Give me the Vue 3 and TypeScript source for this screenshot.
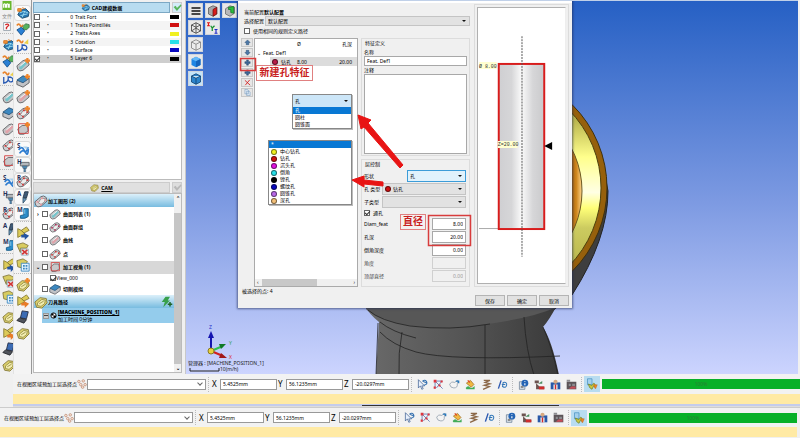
<script setup lang="ts">
import { ref } from 'vue'

interface Tool { icon: string; tint?: string; letter?: string; star?: boolean; sep?: boolean; framed?: boolean; label: string }

const camTools: Tool[] = [
  { icon: 'block', tint: 'teal', star: true, sep: true, label: '曲面列表' },
  { icon: 'slab', tint: 'blue', star: true, label: '毛坯' },
  { icon: 'block', tint: 'rose', star: true, label: '曲线' },
  { icon: 'dots', tint: 'red', star: true, label: '点' },
  { icon: 'frame', tint: 'red', star: true, label: '视角' },
  { icon: 'rings', letter: 'S', sep: true, framed: true, label: '仿真' },
  { icon: 'drill', letter: 'H', framed: true, label: '钻孔' },
  { icon: 'dots', tint: 'red', letter: 'R', framed: true, label: '粗加工' },
  { icon: 'mill', letter: 'A', framed: true, label: '自动' },
  { icon: 'boot', letter: 'M', framed: true, label: '铣削' },
  { icon: 'goldmove', tint: 'navy', sep: true, label: '移动' },
  { icon: 'goldcut', tint: 'red', label: '删除' },
  { icon: 'goldlist', tint: 'blue', label: '列表' },
  { icon: 'gold', star: true, sep: true, label: '刀具路径' },
  { icon: 'goldmove', tint: 'orange', label: '转换' },
  { icon: 'laptop', label: '机床' },
  { icon: 'gold', label: '零件' },
]
const cadTools: Tool[] = [
  { icon: 'globe', framed: true, label: 'CAD' },
  { icon: 'drop', tint: 'green', label: '实体' },
  { icon: 'curve', label: '草图' },
]
const rail = [...cadTools, ...camTools]

const layers = ref([
  { name: 'Trait Fort', color: 'black', on: false },
  { name: 'Traits Pointillés', color: 'red', on: false },
  { name: 'Traits Axes', color: 'yellow', on: false },
  { name: 'Cotation', color: 'cyan', on: false },
  { name: 'Surface', color: 'navy', on: false },
  { name: 'Layer 6', color: 'black', on: true },
])

const camRows = [
  { label: '曲面列表 (1)', icon: 'block', tint: 'teal', mark: '›' },
  { label: '曲面群组', icon: 'dots', tint: 'wine', mark: '' },
  { label: '曲线', icon: 'block', tint: 'rose', mark: '' },
  { label: '点', icon: 'dots', tint: 'red', mark: '' },
  { label: '加工视角 (1)', icon: 'frame', tint: 'red', mark: '⌄' },
]

const viewButtons = ['menu', 'boxred', 'boxgreen', 'wire', 'axes', '', 'hidden', '', '', 'solid', '', '', 'solidedge']

const featTools = ['up', 'down', 'plus', 'plus', 'cross', 'copy']
const featLabels = ['上移', '下移', '新建孔特征', '添加', '删除', '复制']

const holeTypes = [
  { name: '中心钻孔', color: 'yellow' },
  { name: '钻孔', color: 'red' },
  { name: '沉头孔', color: 'magenta' },
  { name: '倒角', color: 'cyan' },
  { name: '镗孔', color: 'black' },
  { name: '螺纹孔', color: 'navy' },
  { name: '圆锥孔', color: 'violet' },
  { name: '深孔', color: 'tan' },
]

const dims = ref([
  { label: 'Diam_feat', value: '8.00', off: false },
  { label: '孔深', value: '20.00', off: false },
  { label: '倒角深度', value: '0.00', off: false },
  { label: '角度', value: '', off: true },
  { label: '顶部直径', value: '0.00', off: true },
])

const coords = [
  { axis: 'X', value: '5.4525mm' },
  { axis: 'Y', value: '56.1235mm' },
  { axis: 'Z', value: '-20.0297mm' },
]
const pickTools = ['pick', 'net', 'bird', 'paint', 'spring', 'pen']
const runTools = ['info', 'chart', 'person', 'film']

const featName = ref('Feat. Def1')
const through = ref(true)
const sameRule = ref(false)
</script>

<template>
  <svg class="defs" aria-hidden="true">
    <defs>
      <linearGradient id="gold-face" x1="0" y1="0" x2="0" y2="1">
        <stop offset="0" stop-color="#a8a038" /><stop offset=".2" stop-color="#bcb850" />
        <stop offset=".36" stop-color="#ffff8c" /><stop offset=".52" stop-color="#ffffe4" />
        <stop offset=".59" stop-color="#ffff78" /><stop offset=".68" stop-color="#cccb60" />
        <stop offset="1" stop-color="#a8a23c" />
      </linearGradient>
      <linearGradient id="bore" x1="0" x2="1">
        <stop offset=".9" stop-color="#2c2418" /><stop offset=".93" stop-color="#9c5800" />
        <stop offset=".97" stop-color="#d08820" /><stop offset="1" stop-color="#ffd890" />
      </linearGradient>
      <linearGradient id="shaft" x1="0" x2="1">
        <stop offset="0" stop-color="#6a6a6a" /><stop offset=".5" stop-color="#555" /><stop offset="1" stop-color="#3a3a3a" />
      </linearGradient>
      <linearGradient id="tube" x1="0" x2="1">
        <stop offset="0" stop-color="#cfcfd2" /><stop offset=".28" stop-color="#d6d6d8" /><stop offset=".5" stop-color="#fafafa" />
        <stop offset=".75" stop-color="#d6d6d8" /><stop offset="1" stop-color="#cacacc" />
      </linearGradient>
    </defs>
    <symbol id="i-globe" viewBox="0 0 16 16">
      <path d="M5 5 11 3 15 7 14 12 7 14 2 10z" fill="#2878b4" stroke="#174868" />
      <path d="M4 8 9 6l5 2M7 13l3-7M5 11l8-2" fill="none" stroke="#9fe0f4" />
      <path d="M2 3h4v3H2zM7 2l3 1" fill="#f0943c" stroke="#d8741c" />
    </symbol>
    <symbol id="i-drop" viewBox="0 0 16 16">
      <path d="M1 4q2-3 4 0t3-1" fill="none" stroke="#e8842c" stroke-width="2" />
      <path d="M8 5 11 2l4 1v3l-3 3-4-1z" fill="currentColor" stroke="#407850" />
      <path d="M1 9 6 6l4 4-4 5z" fill="#2a80d4" stroke="#15518e" />
    </symbol>
    <symbol id="i-curve" viewBox="0 0 16 16">
      <path d="M1 4q2-3 4 0t3-1" fill="none" stroke="#e8842c" stroke-width="2" />
      <path d="M2 8v7q6-1 5-7 7 0 5 5-3 2-5-2" fill="none" stroke="#2b5cb4" stroke-width="1.5" />
      <path d="M9 6 14 1v6z" fill="#ecd04c" />
    </symbol>
    <symbol id="i-block" viewBox="0 0 16 16">
      <path d="M1 9 8 3q3-2 6 1l1 4-7 6q-4 2-6-1z" fill="#c4c4c6" stroke="#626266" />
      <path d="M4 10 11 4q2 0 2 2l-7 7q-3 0-2-3z" fill="currentColor" opacity=".75" />
      <path d="M5 9 11 4" stroke="#fff" />
    </symbol>
    <symbol id="i-slab" viewBox="0 0 16 16">
      <path d="M1 8 8 3l7 2v5l-7 5-7-3z" fill="#c0c2c6" stroke="#55585c" />
      <path d="M1 7 8 2l7 3-7 5z" fill="currentColor" stroke="#2c5578" />
    </symbol>
    <symbol id="i-dots" viewBox="0 0 16 16">
      <path d="M1 9 8 3q3-2 6 1l1 4-7 6q-4 2-6-1z" fill="#d0d0d2" stroke="#5e5e62" />
      <path d="M5 10 8 5l5 0-1 4-4 3z" fill="#eee" stroke="#888" />
      <path d="M3 8h2v2H3zM8 4h2v2H8zM12 6h2v2h-2zM7 11h2v2H7z" fill="currentColor" />
    </symbol>
    <symbol id="i-frame" viewBox="0 0 16 16">
      <path d="M2 8 7 4h6l1 6-5 4H4z" fill="#c8c8ca" stroke="#646468" />
      <path d="M3 2h11v11H3z" fill="none" stroke="currentColor" />
    </symbol>
    <symbol id="i-rings" viewBox="0 0 16 16">
      <path d="M3 9q4-5 6 0t5-3M4 13q4-6 7-1t3-4" fill="none" stroke="#2f7dd0" stroke-width="2" />
      <path d="M8 5 13 5 13 9z" fill="#a8d0ec" />
    </symbol>
    <symbol id="i-drill" viewBox="0 0 16 16">
      <path d="M5 5h10v4H5z" fill="#b4b8bc" stroke="#606468" />
      <path d="M7 9h6l-1 3H8zM9 12h2v4H9z" fill="#4e88b0" stroke="#44586c" stroke-width=".5" />
    </symbol>
    <symbol id="i-mill" viewBox="0 0 16 16">
      <path d="M10 2h4l-2 7-4 0z" fill="#405c78" stroke="#28384c" />
      <path d="m8 9 4 1-4 5z" fill="#6c9cc0" stroke="#38566c" />
    </symbol>
    <symbol id="i-boot" viewBox="0 0 16 16">
      <path d="M9 3h5v9q-3 3-9 2v-3l4-1z" fill="#2d8cc8" stroke="#175884" />
      <path d="M10 4v5" stroke="#94d4f4" />
    </symbol>
    <symbol id="i-gold" viewBox="0 0 16 16">
      <path d="M1 8 7 3l7 1 1 5-6 6-6-1z" fill="#dcd06c" stroke="#84783c" />
      <path d="M4 9 9 5l4 1-1 4-4 3-4-1zM6 10l5-3" fill="#f2ecae" stroke="#989048" />
    </symbol>
    <symbol id="i-goldmove" viewBox="0 0 16 16">
      <path d="M2 3v10l8-4-4-4zM6 5l6-4 3 4-6 3z" fill="#dccb58" stroke="#887c34" />
      <path d="M9 8l6 3-5 5 0-3-4 0v-3h3z" fill="currentColor" />
    </symbol>
    <symbol id="i-goldcut" viewBox="0 0 16 16">
      <path d="M1 3 8 1l6 3-2 3-7 0v5z" fill="#d8cc60" stroke="#84783c" />
      <path d="M6 8h8v7H6z" fill="#fff" stroke="#8ab" /><path d="m7 9 6 5m0-5-6 5" stroke="currentColor" stroke-width="2" />
    </symbol>
    <symbol id="i-goldlist" viewBox="0 0 16 16">
      <path d="M1 3 8 1l5 3-4 8-7-2z" fill="#d8cc60" stroke="#84783c" />
      <path d="M6 6h9v9H6z" fill="#e6f4ff" stroke="currentColor" /><path d="M8 8h2v2H8zm3 0h2v2h-2zm-3 3h2v2H8zm3 0h2v2h-2z" fill="currentColor" />
    </symbol>
    <symbol id="i-laptop" viewBox="0 0 16 16">
      <path d="M7 1l7 1-2 8-7-1z" fill="#3c6cb4" stroke="#222c44" /><path d="M4 9l8 2-3 4-8-3z" fill="#50545c" stroke="#25272c" />
    </symbol>
    <symbol id="i-menu" viewBox="0 0 16 16"><path d="M2 4h12M2 8h12M2 12h12" stroke="#111" stroke-width="2" /></symbol>
    <symbol id="i-boxred" viewBox="0 0 16 16">
      <path d="M2 4 8 1l5 2v9l-5 3-6-3z" fill="#a8a8aa" stroke="#555" /><path d="M8 6l5-3v9l-5 3z" fill="#d81c1c" stroke="#701010" />
    </symbol>
    <symbol id="i-boxgreen" viewBox="0 0 16 16">
      <path d="M2 5 8 1l6 2v8l-6 4-6-3z" fill="#b8b8ba" stroke="#666" /><path d="M6 3l7-1v9l-4-1V6H6z" fill="#28c03c" stroke="#147820" />
    </symbol>
    <symbol id="i-wire" viewBox="0 0 16 16"><path d="M2 4 8 1l6 3v8l-6 3-6-3zM2 4l6 3 6-3M8 1v14M2 12l6-4 6 4" fill="none" stroke="#333" /></symbol>
    <symbol id="i-hidden" viewBox="0 0 16 16"><path d="M2 4 8 1l6 3v8l-6 3-6-3zM2 4l6 3 6-3M8 7v8" fill="#ececec" stroke="#777" /></symbol>
    <symbol id="i-solid" viewBox="0 0 16 16"><path d="M2 4 8 1l6 3v8l-6 3-6-3z" fill="#1f86e4" /><path d="M2 4 8 1l6 3-6 3z" fill="#64b8f8" /><path d="M8 7l6-3v8l-6 3z" fill="#1464bc" /></symbol>
    <symbol id="i-solidedge" viewBox="0 0 16 16"><path d="M2 4 8 1l6 3v8l-6 3-6-3zM2 4l6 3 6-3M8 7v8" fill="#2b84cc" stroke="#0e3c68" /></symbol>
    <symbol id="i-axes" viewBox="0 0 16 16">
      <path d="M0 1h4M2 1v4M0 5h4" stroke="#e01818" stroke-width="1.5" /><path d="m5 5 2 3 3-3M7 8v4" fill="none" stroke="#189030" stroke-width="1.7" />
      <path d="M10 10h4M12 10v5M10 15h4" stroke="#1c28c8" stroke-width="1.5" />
    </symbol>
    <symbol id="i-up" viewBox="0 0 16 16"><path d="m8 2 6 6h-3v5H5V8H2z" fill="#4c78a8" stroke="#23486c" /></symbol>
    <symbol id="i-down" viewBox="0 0 16 16"><path d="m8 14 6-6h-3V3H5v5H2z" fill="#4c78a8" stroke="#23486c" /></symbol>
    <symbol id="i-plus" viewBox="0 0 16 16"><path d="M6 2h4v4h4v4h-4v4H6v-4H2V6h4z" fill="#3c6898" stroke="#1e3c60" /></symbol>
    <symbol id="i-cross" viewBox="0 0 16 16"><path d="m2 3 12 11M13 2 3 14" stroke="#d42020" stroke-width="2" /></symbol>
    <symbol id="i-copy" viewBox="0 0 16 16"><path d="M2 1h6l2 2v8H2zM6 5h6l2 2v8H6z" fill="#dce8f4" stroke="#5c88b4" /></symbol>
    <symbol id="i-pick" viewBox="0 0 16 16"><path d="M2 1v12l3-3 2 5 2-1-2-4h4z" fill="#e8f0fc" stroke="#34588c" /><path d="M8 3q4-3 6 1t-4 5M8 3l6 3" fill="none" stroke="#3470b0" stroke-width="1.5" /></symbol>
    <symbol id="i-net" viewBox="0 0 16 16"><path d="M3 3h11M3 3v11M3 3l11 11M13 3 5 13" fill="none" stroke="#3c5ca8" /><path d="M1 1h4v4H1zM11 2h3v3h-3zM1 11h3v3H1zM8 8h3v3H8z" fill="#e0343c" /></symbol>
    <symbol id="i-bird" viewBox="0 0 16 16"><path d="M1 8q2-5 7-3l5-3-1 5q1 6-5 6-5 0-6-5z" fill="#f4f4f4" stroke="#8090a0" /><path d="M10 3h4v3" fill="none" stroke="#2878bc" stroke-width="2" /></symbol>
    <symbol id="i-paint" viewBox="0 0 16 16"><path d="M2 6 8 2l5 6-4 4z" fill="#f0b840" stroke="#986820" /><path d="M1 13q3-4 6-1t7-2v5H2z" fill="#42ac58" /><path d="M4 2l3 3" stroke="#e04820" stroke-width="2" /></symbol>
    <symbol id="i-spring" viewBox="0 0 16 16"><path d="M4 2h9L6 5l7 2-8 2 7 2-9 4" fill="none" stroke="#8c6848" stroke-width="2" /></symbol>
    <symbol id="i-pen" viewBox="0 0 16 16"><path d="M2 14 6 2" stroke="#2c58b0" stroke-width="2" /><path d="M9 5q6-1 5 4t-6 2zM7 8h5" fill="none" stroke="#3478b8" stroke-width="1.5" /></symbol>
    <symbol id="i-info" viewBox="0 0 16 16"><path d="M2 4h8v11H2z" fill="#dce4ec" stroke="#60748c" /><circle cx="10" cy="6" r="5" fill="#2464b4" /><path d="M10 3v1M10 6v3" stroke="#fff" stroke-width="1.6" /><path d="M4 10h4v3H4z" fill="#888" /></symbol>
    <symbol id="i-chart" viewBox="0 0 16 16"><path d="M1 2h6v4H1zM3 6v9h12v-4H8z" fill="#6c5450" /><path d="M7 11h8v4H7z" fill="#d02c2c" /><path d="M6 7l6-4v4z" fill="#4c8c60" /></symbol>
    <symbol id="i-person" viewBox="0 0 16 16"><path d="M1 5h14v10H1z" fill="#2858a8" /><circle cx="8" cy="4" r="3" fill="#d8a880" /><path d="M5 8h6v7H5z" fill="#e8e8e8" /><path d="M7 8h2v7H7z" fill="#d42828" /></symbol>
    <symbol id="i-film" viewBox="0 0 16 16"><path d="M1 4h14v11H1z" fill="#5c5458" /><path d="M1 1h5v3H1zM4 7h3v3H4zM9 7h4v3H9z" fill="#8c8c90" /><path d="M8 11h6v3H4z" fill="#c84c58" /></symbol>
    <symbol id="i-run" viewBox="0 0 16 16"><path d="M2 1h6v8H2z" fill="#a4d0ec" stroke="#4c94c4" /><path d="M3 8l2 5 3 2 2-4 2 1 0-4-2-1-2 3z" fill="#ccc43c" stroke="#6c8830" /><path d="M10 9h5l-2 5h-1z" fill="#ec8424" stroke="#b45c14" stroke-width=".5" /></symbol>
    <symbol id="i-chain" viewBox="0 0 16 16"><g fill="#fbe4d4" stroke="#b47c64"><circle cx="3" cy="4" r="2" /><circle cx="10" cy="3" r="2" /><circle cx="6" cy="9" r="2" /><circle cx="13" cy="9" r="2" /><circle cx="9" cy="13" r="2" /></g></symbol>
    <symbol id="i-bolt" viewBox="0 0 16 16"><path d="M6 1h6L9 6h3L3 15l2-7H1z" fill="#38a04c" /><path d="M9 11h6m-3-3v6" stroke="#206428" stroke-width="2" /></symbol>
    <symbol id="i-logo" viewBox="0 0 16 16"><path d="M0 0h16v16H0z" fill="#68b82c" /><path d="M2 12V6q2-2 3 0v6M7 12V6q2-2 3 0v6M12 12V5" fill="none" stroke="#fff" stroke-width="2" /></symbol>
    <symbol id="i-doc" viewBox="0 0 16 16"><path d="M2 1h12v14H2z" fill="#fff" stroke="#607080" /><path d="M5 5q5-3 6 1l-4 4v3" fill="none" stroke="#d42828" stroke-width="2.5" /></symbol>
    <symbol id="i-pos" viewBox="0 0 16 16"><circle cx="8" cy="8" r="6" fill="#fff" stroke="#000" stroke-width="2" /><path d="M8 2v6H2q0-5 6-6zM8 8h6q0 6-6 6z" /></symbol>
    <symbol id="i-check" viewBox="0 0 16 16"><path d="m1 7 4-2 2 4 7-7 1 3-8 9z" fill="currentColor" /></symbol>
  </svg>

  <div class="app">
    <aside class="rail outer">
      <div class="brand">
        <svg class="ico small"><use href="#i-logo" /></svg>
        <span>文件</span>
        <svg class="ico small"><use href="#i-doc" /></svg>
      </div>
      <template v-for="t in rail" :key="t.label">
        <hr v-if="t.sep || t.label === 'CAD'">
        <button class="tool" :aria-label="t.label">
          <svg class="ico" :class="t.tint" viewBox="0 0 16 16"><use :href="'#i-' + t.icon" /><text v-if="t.letter" x="1" y="7">{{ t.letter }}</text></svg>
        </button>
      </template>
    </aside>

    <main class="work">
      <aside class="rail inner">
        <template v-for="t in rail" :key="t.label">
          <hr v-if="t.sep">
          <button class="tool" :class="{ framed: t.framed }" :aria-label="t.label">
            <svg class="ico" :class="t.tint" viewBox="0 0 16 16"><use :href="'#i-' + t.icon" /><path v-if="t.star" d="M13 0v6M10 3h6" stroke="#f08428" stroke-width="2.5" /><text v-if="t.letter" x="1" y="7">{{ t.letter }}</text></svg>
          </button>
        </template>
      </aside>

      <section class="panels">
        <div class="bar">
          <h2 class="cad"><svg class="ico mini"><use href="#i-globe" /></svg>CAD建模数据</h2>
          <button class="ok cadok" aria-label="应用"><svg class="ico mini green"><use href="#i-check" /></svg></button>
        </div>
        <div class="layers">
          <table>
            <tbody>
              <tr v-for="(l, i) in layers" :key="l.name" :class="{ sel: i === 5 }">
                <td class="c1"><input v-model="l.on" type="checkbox" :aria-label="l.name"></td>
                <td class="c2">•</td>
                <td class="c3">{{ i }}</td>
                <td>{{ l.name }}</td>
                <td class="c5"><i class="swatch" :class="l.color"></i></td>
              </tr>
            </tbody>
          </table>
        </div>
        <div class="bar">
          <h2 class="cam"><svg class="ico mini"><use href="#i-gold" /></svg><u>CAM</u></h2>
          <button class="ok" aria-label="应用 CAM"><svg class="ico mini grey"><use href="#i-check" /></svg></button>
        </div>
        <div class="tree">
          <div class="nodes">
            <h3 class="head"><svg class="ico rose"><use href="#i-dots" /></svg>加工图形 (2)</h3>
            <div class="rows">
              <label v-for="(r, i) in camRows" :key="r.label" class="node" :class="{ cur: i === 4 }">
                <span class="mark">{{ r.mark }}</span><input type="checkbox">
                <svg class="ico mid" :class="r.tint"><use :href="'#i-' + r.icon" /></svg>{{ r.label }}
              </label>
            </div>
            <label class="leaf"><input type="checkbox" checked>View_000</label>
            <label class="node last"><span class="mark"></span><input type="checkbox"><svg class="ico mid blue"><use href="#i-slab" /></svg>切削模拟</label>
            <h3 class="head"><svg class="ico"><use href="#i-gold" /></svg>刀具路径<svg class="ico mid end"><use href="#i-bolt" /></svg></h3>
            <div class="machine">
              <button class="fold" aria-label="折叠"></button><svg class="ico mini"><use href="#i-pos" /></svg>
              <p><b>[MACHINE_POSITION_1]</b><span>加工时间 0分钟</span></p>
            </div>
          </div>
          <div class="vscroll"><span>⌃</span><i></i><span>⌄</span></div>
        </div>
      </section>

      <section class="view">
        <svg class="scene" viewBox="186 0 612 374" preserveAspectRatio="xMinYMin slice" aria-hidden="true">
          <path d="M560 130Q603 150 608 190 608 238 572 294L540 320z" fill="#3e3e3e" stroke="#222" />
          <circle cx="490" cy="187" r="117" fill="#96600c" stroke="#40300c" />
          <circle cx="490" cy="187" r="111" fill="url(#gold-face)" stroke="#4c400c" />
          <circle cx="490" cy="190" r="92" fill="url(#bore)" stroke="#6c5820" />
          <path d="M364 304Q370 314 379 321L376 374H559Q552 340 543 326 550 318 557 304z" fill="url(#shaft)" />
          <path d="M366 308Q375 317 400 323 440 330 480 324 530 318 557 306V300H366z" fill="#575757" />
          <path d="M368 309Q380 320 410 325 450 330 490 323M380 331Q392 344 416 351 450 360 560 355M380 321Q392 331 416 337M402 331Q398 352 399 374M485 324V374M524 316Q526 350 534 374M378 322l-2 52M543 326q9 20 15 48" fill="none" stroke="#222" stroke-width=".8" />
          <g class="triad">
            <path d="M211 350V336" stroke="#1414b0" stroke-width="2" /><path d="m208 337 3-7 3 7z" fill="#1414b0" />
            <path d="m211 350 12-5" stroke="#30c050" stroke-width="2" /><path d="m219 343 7 0-5 5z" fill="#107824" />
            <path d="m211 350 12 5" stroke="#d02020" stroke-width="2" /><path d="m221 352 6 5-8 0z" fill="#a01818" />
            <circle cx="211" cy="350" r="3" fill="#e8d040" stroke="#8c7c20" />
            <text class="az" x="209" y="328">Z</text><text class="ay" x="229" y="344">Y</text><text class="ax" x="229" y="358">X</text>
          </g>
          <path d="M190 367v3h29v-3" fill="none" stroke="#222" />
          <text x="188" y="364">管理器 : [MACHINE_POSITION_1]</text>
          <text x="220" y="370">10(m/h)</text>
        </svg>
        <div class="vbtns">
          <template v-for="(b, i) in viewButtons" :key="i">
            <button v-if="b" :class="{ on: b === 'solidedge' }" :aria-label="b"><svg class="ico mid"><use :href="'#i-' + b" /></svg></button>
            <span v-else></span>
          </template>
        </div>

        <div class="dialog" role="dialog" aria-label="特征定义">
          <div class="cols">
            <div class="main">
              <p class="line">当前配置<b>默认配置</b></p>
              <label class="line">选择配置<span class="pick grow"><select><option>默认配置</option></select></span></label>
              <label class="line same"><input v-model="sameRule" type="checkbox">使用相同的规则定义路径</label>
              <div class="split">
                <div class="ftools">
                  <button v-for="(f, i) in featTools" :key="i" :aria-label="featLabels[i]"><svg class="ico mini"><use :href="'#i-' + f" /></svg></button>
                </div>
                <div class="feats">
                  <table>
                    <thead><tr><th></th><th>Ø</th><th class="num">孔深</th></tr></thead>
                    <tbody>
                      <tr><td colspan="3" class="root"><span class="mark">⌄</span>Feat. Def1</td></tr>
                      <tr class="hole"><td class="name"><i class="dot crimson"></i>钻孔</td><td>8.00</td><td class="num">20.00</td></tr>
                    </tbody>
                  </table>
                  <div class="hscroll"><span>‹</span><i></i><span>›</span></div>
                </div>
                <div class="forms">
                  <div class="group first">
                    <h4>特征定义</h4>
                    <label for="fname">名称</label>
                    <input id="fname" v-model="featName" type="text">
                    <label for="fnote">注释</label>
                    <textarea id="fnote"></textarea>
                  </div>
                  <div class="group second">
                    <h4>层控制</h4>
                    <label class="row">形状<span class="pick hot short"><select><option>孔</option></select></span></label>
                    <label class="row">孔 类型<span class="pick wide"><i class="dot red"></i><select class="dotted"><option>钻孔</option></select></span></label>
                    <label class="row">子类型<span class="pick wide"><select><option></option></select></span></label>
                    <label class="thru"><input v-model="through" type="checkbox">通孔</label>
                    <label v-for="d in dims" :key="d.label" class="row" :class="{ off: d.off }">{{ d.label }}<input v-model="d.value" type="text" :disabled="d.off"></label>
                  </div>
                </div>
              </div>
            </div>
            <div class="preview">
              <svg viewBox="478 7 88 277" aria-hidden="true">
                <path d="M479 229.500h20" stroke="#aaa" />
                <rect x="499" y="63" width="46" height="167" fill="url(#tube)" stroke="#d81c1c" stroke-width="2" />
                <path d="M522.500 35v223" stroke="#555" stroke-dasharray="2 1" />
                <path d="M479 61h18v7h-18zM498 141h20v7h-20z" fill="#ffffd0" />
                <path d="m545 146 8-4v8z" />
                <text x="479" y="67">Ø 8.00</text><text x="498" y="146">Z=20.00</text>
              </svg>
            </div>
          </div>
          <p class="status">被选择的点: 4</p>
          <div class="actions"><button>保存</button><button>确定</button><button>取消</button></div>

          <ul class="pop shapes"><li class="field">孔<i></i></li><li class="hit">孔</li><li>圆柱</li><li>圆锥面</li></ul>
          <ul class="pop types"><li class="hit">*</li><li v-for="h in holeTypes" :key="h.name"><i class="dot" :class="h.color"></i>{{ h.name }}</li></ul>
          <svg class="marks" viewBox="238 0 334 308" aria-hidden="true">
            <g fill="none" stroke="#d83c3c"><path d="M240.500 58.500h15v12h-15z" stroke-width="1.500" /><path d="M428.500 215.500h42v30h-42z" stroke-width="1.500" /></g>
            <path d="M358 115 371 120 368 123 403 165 400 168 364 127 361 129z" fill="#e81414" stroke="#e81414" />
            <path d="M352 180 364 176V180L383 182V186L364 184V187z" fill="#e81414" stroke="#e81414" />
          </svg>
          <span class="note new">新建孔特征</span>
          <span class="note dia">直径</span>
        </div>
      </section>
    </main>

    <footer v-for="n in 2" :key="n" class="foot" :class="'foot' + n">
      <div class="tools">
        <label class="prompt" :for="'layer' + n">在视图区域预加工层选择点</label>
        <svg class="ico chain"><use href="#i-chain" /></svg>
        <span class="pick chooser"><select :id="'layer' + n"><option></option></select></span>
        <hr>
        <label v-for="c in coords" :key="c.axis" class="coord"><span>{{ c.axis }}</span><input type="text" :value="c.value"></label>
        <hr>
        <button v-for="p in pickTools" :key="p" class="ft" :aria-label="p"><svg class="ico mini"><use :href="'#i-' + p" /></svg></button>
        <hr>
        <button v-for="p in runTools" :key="p" class="ft" :aria-label="p"><svg class="ico mini"><use :href="'#i-' + p" /></svg></button>
        <hr>
        <button class="ft lit" aria-label="运行"><svg class="ico mid"><use href="#i-run" /></svg></button>
        <div class="prog" role="progressbar" aria-valuenow="100">100%</div>
      </div>
      <div class="hint"></div>
      <div v-if="n === 1" class="sliver"><i></i></div>
    </footer>
  </div>
</template>

<style>
body { background: #f0f0f0; }
</style>

<style scoped>
.defs { position: absolute; width: 0; height: 0; }
.app, .app * { box-sizing: border-box; }
.app {
  display: grid; grid-template-columns: 13px minmax(0, 1fr); grid-template-rows: 1fr auto auto;
  min-height: 100vh; background: #f0f0f0; color: #000; overflow: hidden;
  font: 5px/8px "Noto Sans", "Noto Sans CJK SC", sans-serif;
}
button, input, select, textarea { font: inherit; color: inherit; margin: 0; padding: 0; border-radius: 0; min-width: 0; }
button { background: none; border: 0; display: flex; align-items: center; justify-content: center; }
p, h2, h3, h4, ul, hr { margin: 0; padding: 0; font-size: inherit; }
ul { list-style: none; }
svg { display: block; flex: none; }
.ico { width: 14px; height: 14px; overflow: visible; }
.ico text { font: bold 7px "Noto Sans", sans-serif; fill: #283058; }
.mid { width: 12px; height: 12px; }
.mini { width: 9px; height: 9px; }
input[type="checkbox"] { appearance: none; width: 6px; height: 6px; border: 1px solid #666; background: #fff; flex: none; display: grid; place-items: center; }
input[type="checkbox"]:checked::before { content: ""; width: 4px; height: 2px; border: solid #333; border-width: 0 0 1px 1px; transform: rotate(-45deg); }

.teal { color: #5cc4cc; } .blue { color: #3c88c0; } .rose { color: #e898a0; } .red { color: #d03838; }
.wine { color: #b02c58; } .green { color: #58b45c; } .grey { color: #b8b8b8; } .navy { color: #2454a0; } .orange { color: #e87c28; }

.rail { display: flex; flex-direction: column; }
.outer { grid-row: 1 / 3; overflow: hidden; }
.inner { padding: 5px 0 0; border-left: 1px solid #e2e2e2; background: #f4f4f4; }
.rail hr { width: 100%; height: 4px; border: 0; border-top: 1px dotted #bbb; flex: none; }
.tool { width: 17px; height: 16px; flex: none; }
.framed { border: 1px solid #dadada; border-radius: 3px; background: #fafafa; }
.brand { height: 33px; display: flex; flex-direction: column; justify-content: space-between; padding: 1px 0 2px; flex: none; }
.brand span { padding-left: 2px; color: #888; white-space: nowrap; }
.small { width: 10px; height: 9px; align-self: center; }

.work { display: grid; grid-template-columns: 18px 154px minmax(0, 1fr); padding-right: 2px; min-width: 0; }
.panels { display: flex; flex-direction: column; padding: 2px 3px 1px 1px; border-left: 1px solid #999; background: #f0f0f0; }
.bar { display: flex; gap: 2px; height: 11px; flex: none; }
.bar h2 { flex: 1; display: flex; align-items: center; justify-content: center; gap: 2px; }
.cad { background: #b8dcf0; border: 1px solid #7ca8c4; }
.cam { background: #e0e0e0; border: 1px solid #ccc; }
.ok { width: 10px; background: #ddd; border: 1px solid #ccc; }
.cadok { background: #d4ecf8; }
.layers { background: #fff; border: 1px solid #bbb; border-top: 0; height: 167px; margin-bottom: 2px; flex: none; }
.layers table { width: 100%; height: 50px; border-collapse: collapse; table-layout: fixed; }
.layers td { padding: 0; line-height: 7px; white-space: nowrap; }
.layers tr:nth-child(even) { background: #f4f4f4; }
.layers tr.sel { background: #cecece; }
.c1 { width: 9px; } .c2 { width: 6px; text-align: right; color: #555; } .layers .c3 { width: 26px; text-align: right; padding-right: 2px; } .c5 { width: 11px; }
.swatch { display: block; width: 9px; height: 4px; }
.black { background: #000; } .swatch.red, .dot.red { background: #d01010; } .yellow { background: #f0f020; } .cyan { background: #28e0e8; }
.swatch.navy, .dot.navy { background: #0808c0; } .magenta { background: #e010e0; } .violet { background: #b868e8; } .tan { background: #f4c078; } .crimson { background: #b81c48; }
.tree { flex: 1; display: flex; background: #fff; border: 1px solid #bbb; font-weight: bold; }
.nodes { flex: 1; min-width: 0; }
.head { display: flex; align-items: center; height: 13px; background: linear-gradient(#dcf0fa, #78bce0); }
.end { margin-left: auto; margin-right: 1px; }
.rows { display: grid; grid-template-rows: repeat(5, 1fr); height: 67px; }
.node { display: flex; align-items: center; }
.node .ico { margin: 0 2px 0 1px; }
.cur { background: #d8d8d8; }
.mark { display: inline-block; width: 8px; text-align: center; }
.leaf { display: flex; align-items: center; padding-left: 16px; height: 8px; font-weight: normal; }
.last { height: 13px; }
.machine { display: flex; align-items: center; gap: 1px; margin-left: 8px; padding-left: 1px; height: 15px; background: #94ccec; }
.machine p { display: flex; flex-direction: column; line-height: 7px; }
.machine b { text-decoration: underline; }
.machine span { font-weight: normal; }
.machine .mini { width: 7px; height: 7px; }
.fold { width: 6px; height: 6px; background: linear-gradient(#ccc 1px, #444 1px, #444 2px, #ccc 2px); border: 1px solid #999; }
.vscroll { width: 7px; display: flex; flex-direction: column; background: #f0f0f0; text-align: center; }
.vscroll span { height: 8px; }
.vscroll i { flex: 1; margin-top: 11px; background: #c6c6c6; }

.view { position: relative; border-top: 1px solid #c0d0e8; border-left: 1px solid #c8c8c8; background: linear-gradient(#2660c4, #7d9ae2 54%, #ccd4fe); overflow: hidden; }
.scene { position: absolute; inset: 0; width: 100%; height: 100%; }
.scene text { fill: #222; }
.scene .az { fill: #2830c8; } .scene .ay { fill: #2c9c50; } .scene .ax { fill: #d82c2c; }
.vbtns { position: relative; display: grid; grid-template-columns: repeat(3, 15px); grid-auto-rows: 15px; gap: 2px; padding: 2px; }
.vbtns button { background: #e8e8e8; border: 1px solid #cfd4dc; }
.vbtns .on { background: #c4e4f8; }

.dialog { position: absolute; left: 52px; top: -1px; width: 334px; background: #f0f0f0; border-top: 3px solid #fff; padding: 1px 3px 2px; box-shadow: 0 0 2px 1px rgba(30, 40, 80, .6); }
.cols { display: grid; grid-template-columns: minmax(0, 1fr) 95px; gap: 4px; }
.main { padding-top: 3px; }
.line { display: flex; align-items: center; height: 9px; padding-left: 3px; white-space: nowrap; }
label.line { height: 10px; }
.same { gap: 3px; }
.pick { position: relative; display: block; background: #e2e2e2; border: 1px solid #c4c4c4; }
.pick::after { content: ""; position: absolute; right: 3px; top: 50%; margin-top: -1px; border: 2px solid transparent; border-top-color: #111; }
.pick select { appearance: none; display: block; width: 100%; height: 100%; border: 0; background: none; padding: 0 2px; line-height: 8px; }
.grow { flex: 1; height: 10px; margin-left: 1px; }
.split { display: grid; grid-template-columns: 12px 104px minmax(0, 1fr); column-gap: 1px; padding-top: 2px; height: 251px; }
.ftools { display: flex; flex-direction: column; gap: 1px; }
.ftools button { width: 12px; height: 9px; border: 1px solid #c8c8c8; background: #e6e6e6; flex: none; }
.ftools .mini { width: 7px; height: 7px; }
.feats { background: #fff; border: 1px solid #aaa; display: flex; flex-direction: column; justify-content: space-between; }
.feats table { width: 100%; border-collapse: collapse; table-layout: fixed; }
.feats td, .feats th { padding: 0; height: 9px; line-height: 8px; font-weight: normal; text-align: left; }
.feats th:first-child { width: 42px; } .feats .num { text-align: right; padding-right: 5px; }
.hole td { background: #dcdcdc; }
.feats .hole .name { padding-left: 17px; white-space: nowrap; background: linear-gradient(90deg, #fff 15px, #dcdcdc 15px); }
.dot { display: inline-block; width: 6px; height: 6px; border-radius: 50%; border: 1px solid rgba(0, 0, 0, .5); margin-right: 3px; flex: none; }
.name .dot { vertical-align: -1px; }
.hscroll { display: flex; height: 7px; background: #f0f0f0; line-height: 6px; gap: 3px; padding: 0 2px; }
.hscroll i { width: 55px; background: #c8c8c8; margin-right: auto; }
.forms { display: flex; flex-direction: column; gap: 3px; padding-left: 2px; }
.group { border: 1px solid #dcdcdc; padding: 0 2px; display: flex; flex-direction: column; }
.group h4 { font-weight: normal; height: 9px; padding-left: 1px; }
.first { height: 118px; }
.first label { height: 8px; }
.first input { height: 10px; flex: none; }
.group input[type="text"], textarea { border: 1px solid #a8a8a8; background: #fff; padding: 0 2px; }
textarea { flex: 1; resize: none; margin-bottom: 1px; }
.second { flex: 1; padding-right: 3px; }
.row { display: flex; justify-content: space-between; align-items: center; height: 13px; white-space: nowrap; }
.row input[type="text"] { width: 34px; height: 12px; text-align: right; }
.off { color: #444; }
.group .off input { background: #f0f0f0; border-color: #d0d0d0; color: #999; }
.short { width: 59px; height: 12px; } .wide { width: 84px; height: 12px; }
.wide .dot { position: absolute; left: 2px; top: 2px; }
.pick .dotted { padding-left: 10px; }
.hot { background: #e0f2fc; border-color: #3c9cd8; }
.thru { display: flex; align-items: center; gap: 3px; height: 9px; }
.preview { border: 1px solid #dcdcdc; padding: 2px; }
.preview svg { width: 100%; height: 100%; background: #fff; border: 1px solid #b0b0b0; border-right-color: #eee; }
.preview text { font: 5px "Liberation Mono", monospace; fill: #333; }
.status { height: 8px; padding-left: 1px; }
.actions { display: flex; justify-content: flex-end; gap: 2px; }
.actions button { width: 30px; height: 11px; background: #e1e1e1; border: 1px solid #b4b4b4; }

.pop { position: absolute; background: #fff; border: 1px solid #888; box-shadow: 1px 1px 0 #bbb; }
.pop li { height: 7px; line-height: 7px; padding-left: 2px; display: flex; align-items: center; }
.pop .hit { background: #0878d4; color: #fff; }
.shapes { left: 54px; top: 91px; width: 60px; }
.shapes .field { height: 12px; background: #cce6f8; justify-content: space-between; padding-right: 3px; }
.field i { border: 2px solid transparent; border-top-color: #111; margin-top: 2px; }
.types { left: 30px; top: 137px; width: 84px; }
.marks { position: absolute; left: 0; top: -3px; width: 100%; height: 308px; pointer-events: none; }
.note { position: absolute; background: #fff; border: 1px solid #e08080; color: #c82020; font: bold 10px/14px "Liberation Serif", "Noto Sans CJK SC", serif; text-align: center; white-space: nowrap; }
.new { left: 18px; top: 62px; width: 57px; }
.dia { left: 162px; top: 211px; width: 26px; background: #f4f0f0; }

.foot { min-width: 0; }
.foot1 { grid-column: 2; }
.foot2 { grid-column: 1 / 3; padding: 0 3px 1px 0; border-top: 1px solid #ccc; }
.tools { display: flex; align-items: center; height: 20px; padding-left: 4px; background: #f2f2f2; }
.foot2 .tools { height: 19px; }
.tools hr { width: 3px; height: 15px; border: 0; border-left: 1px dotted #bbb; margin: 0 0 0 2px; flex: none; }
.prompt { width: 60px; white-space: nowrap; flex: none; }
.chain { width: 10px; height: 10px; }
.chooser { width: 119px; height: 11px; background: #fff; border-color: #999; flex: none; }
.pick.chooser::after { width: 3px; height: 3px; border: solid #666; border-width: 0 1px 1px 0; transform: rotate(45deg); margin-top: -3px; }
.coord { display: flex; align-items: center; flex: none; }
.coord span { width: 9px; font-size: 8px; padding-left: 1px; }
.coord input { width: 57px; height: 11px; border: 1px solid #999; background: #fff; padding: 0 2px; }
.ft { width: 16px; height: 16px; flex: none; }
.ft .mini { width: 11px; height: 11px; }
.lit { background: #b8dcf0; }
.prog { flex: 1; height: 10px; margin-left: 2px; background: #08b028; color: #2c7c34; text-align: center; line-height: 10px; }
.hint { height: 10px; background: #ffeaa4; }
.sliver { height: 3px; background: #c4ccec; padding: 1px 241px 1px 349px; border-bottom: 1px solid #ddd; }
.sliver i { display: block; height: 1px; background: #333; }
</style>
